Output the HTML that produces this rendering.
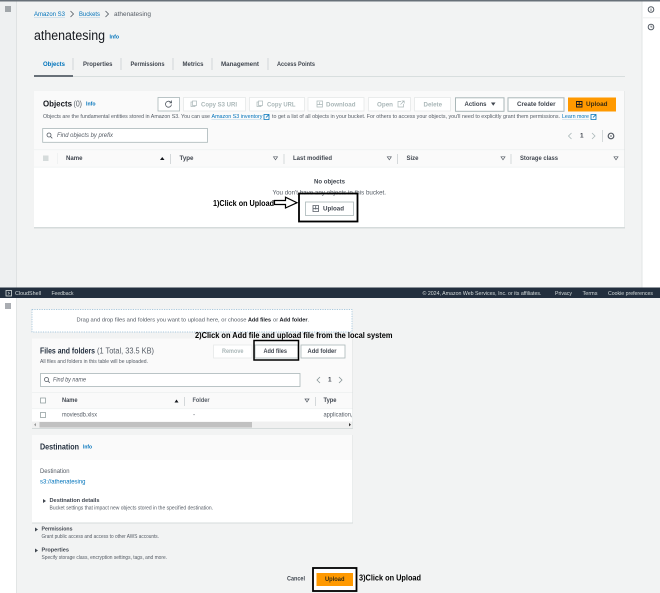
<!DOCTYPE html>
<html><head><meta charset="utf-8"><style>
html,body{margin:0;padding:0;background:#f2f3f3;width:660px;height:593px;overflow:hidden}
svg{display:block;filter:blur(.35px)}
text{font-family:"Liberation Sans",sans-serif;font-size:6.4px;fill:#16191f;dominant-baseline:central;transform:translateY(.6px)}
.b{font-weight:700}.g{fill:#545b64}.l{fill:#aab7b8;font-weight:700}.h{fill:#414750;font-weight:700}
.a{fill:#0073bb}.s{font-size:5.2px;fill:#545b64}.k{fill:#000;font-weight:700;font-size:8.4px}
.w{fill:#d5dbdb;font-size:5.400px}
.btn{fill:#fff;stroke:#aab7b8;stroke-width:.8}.dis{fill:#fff;stroke:#e6e9e9;stroke-width:.8}
.sep{stroke:#c4cacc;stroke-width:.7}
.ic{fill:none;stroke:#545b64;stroke-width:.8}
</style></head><body>
<svg width="660" height="593" viewBox="0 0 660 593" xmlns="http://www.w3.org/2000/svg">
<rect width="660" height="593" fill="#f2f3f3"/>
<!-- top -->
<rect width="660" height="1.5" fill="#687078"/>
<rect y="1.5" width="16" height="287" fill="#eef0f1"/><rect x="16" y="1.5" width="1" height="287" fill="#dfe2e3"/>
<rect x="642" y="1.5" width="18" height="287" fill="#fff"/><rect x="641.5" y="1.5" width="1" height="287" fill="#e2e5e5"/>
<rect x="643" y="17.5" width="17" height=".7" fill="#e6e9e9"/>
<path d="M5 7h6M5 9h6M5 11h6" stroke="#545b64" stroke-width=".9"/>
<circle cx="651" cy="9.500" r="2.800" fill="none" stroke="#545b64" stroke-width="1"/><path d="M651 8.500v2.500" stroke="#545b64" stroke-width=".8"/>
<circle cx="651" cy="27" r="2.800" fill="none" stroke="#545b64" stroke-width="1"/><path d="M651 25.500v1.500h1.500" class="ic"/>
<text x="34" y="14" class="a" textLength="31" lengthAdjust="spacingAndGlyphs">Amazon S3</text><path d="M34 17.300h31" stroke="#9fc6e0" stroke-width=".4"/>
<path d="M70.500 11l3 3-3 3" class="ic"/>
<text x="79" y="14" class="a" textLength="21" lengthAdjust="spacingAndGlyphs">Buckets</text><path d="M79 17.300h21" stroke="#9fc6e0" stroke-width=".4"/>
<path d="M105.500 11l3 3-3 3" class="ic"/>
<text x="114" y="14" class="g" textLength="37" lengthAdjust="spacingAndGlyphs">athenatesing</text>
<text x="34" y="35" style="font-size:13.500px;fill:#16191f" textLength="71" lengthAdjust="spacingAndGlyphs">athenatesing</text>
<text x="109.500" y="37" class="a b" style="font-size:5px" textLength="9.500" lengthAdjust="spacingAndGlyphs">Info</text>
<!-- tabs -->
<text x="43" y="64" class="a b" textLength="22" lengthAdjust="spacingAndGlyphs">Objects</text>
<text x="83" y="64" class="h" textLength="29.500" lengthAdjust="spacingAndGlyphs">Properties</text>
<text x="130.500" y="64" class="h" textLength="34" lengthAdjust="spacingAndGlyphs">Permissions</text>
<text x="182.500" y="64" class="h" textLength="21" lengthAdjust="spacingAndGlyphs">Metrics</text>
<text x="221" y="64" class="h" textLength="38" lengthAdjust="spacingAndGlyphs">Management</text>
<text x="277" y="64" class="h" textLength="38" lengthAdjust="spacingAndGlyphs">Access Points</text>
<path d="M73 58v12M121 58v12M173 58v12M212 58v12M268 58v12" class="sep"/>
<rect x="34" y="76" width="591" height=".9" fill="#d5dbdb"/><rect x="34" y="75" width="39" height="2" fill="#687078"/>
<!-- objects card -->
<rect x="34" y="91" width="591" height="137.500" fill="#d5dbdb"/>
<rect x="34" y="91" width="590.500" height="136" fill="#fff"/>
<rect x="34" y="91" width="590.500" height="76" fill="#fafafa"/>
<text x="43" y="103.500" class="b" style="font-size:7.800px" textLength="29" lengthAdjust="spacingAndGlyphs">Objects</text>
<text x="73.500" y="103.500" class="g" style="font-size:7.800px" textLength="8.500" lengthAdjust="spacingAndGlyphs">(0)</text>
<text x="86" y="104" class="a b" style="font-size:5px" textLength="9.500" lengthAdjust="spacingAndGlyphs">Info</text>
<rect x="158" y="97.500" width="21.500" height="13.500" class="btn"/>
<path d="M171 102.500a3 3 0 1 0 .5 2" class="ic"/><path d="M171.600 100.500v2.400h-2.200" class="ic"/>
<rect x="183.500" y="97.500" width="62" height="13.500" class="dis"/><text x="201" y="104.500" class="l" textLength="36" lengthAdjust="spacingAndGlyphs">Copy S3 URI</text>
<rect x="191" y="102" width="4" height="4.500" fill="none" stroke="#aab7b8" stroke-width=".7"/><rect x="192.500" y="101" width="4" height="4.500" fill="#fff" stroke="#aab7b8" stroke-width=".7"/>
<rect x="249.500" y="97.500" width="55" height="13.500" class="dis"/><text x="267" y="104.500" class="l" textLength="28.500" lengthAdjust="spacingAndGlyphs">Copy URL</text>
<rect x="257" y="102" width="4" height="4.500" fill="none" stroke="#aab7b8" stroke-width=".7"/><rect x="258.500" y="101" width="4" height="4.500" fill="#fff" stroke="#aab7b8" stroke-width=".7"/>
<rect x="308" y="97.500" width="56" height="13.500" class="dis"/><text x="326" y="104.500" class="l" textLength="29.500" lengthAdjust="spacingAndGlyphs">Download</text>
<path d="M317 101h5.500v6h-5.500zM319.700 102v3M317 104.500h5.500" fill="none" stroke="#aab7b8" stroke-width=".7"/>
<rect x="368.500" y="97.500" width="42" height="13.500" class="dis"/><text x="377" y="104.500" class="l" textLength="16" lengthAdjust="spacingAndGlyphs">Open</text>
<path d="M401 101.500h-3v5.500h5.500v-3M400.500 104.500l3.500-3.500M401.700 101h2.500v2.500" fill="none" stroke="#aab7b8" stroke-width=".7"/>
<rect x="414.500" y="97.500" width="36" height="13.500" class="dis"/><text x="423.500" y="104.500" class="l" textLength="18.500" lengthAdjust="spacingAndGlyphs">Delete</text>
<rect x="455.500" y="97.800" width="48.500" height="13.500" fill="#fff" stroke="#aab7b8" stroke-width="1"/><text x="464.500" y="104" class="h" textLength="22" lengthAdjust="spacingAndGlyphs">Actions</text><path d="M491 102.500h4.500l-2.250 3.200z" fill="#414750"/>
<rect x="508" y="97.800" width="56" height="13.500" fill="#fff" stroke="#aab7b8" stroke-width="1"/><text x="517" y="104" class="h" textLength="38.500" lengthAdjust="spacingAndGlyphs">Create folder</text>
<rect x="568" y="97.500" width="48" height="14" fill="#ff9900"/>
<path d="M576.500 101.500h5.500v5.500h-5.500zM579.200 102v3.500M576.500 104.500h5.500" fill="none" stroke="#16191f" stroke-width=".9"/>
<text x="586" y="104" class="b" textLength="21.500" lengthAdjust="spacingAndGlyphs" style="fill:#3a2c10">Upload</text>
<text x="43" y="116.500" class="s" textLength="167" lengthAdjust="spacingAndGlyphs">Objects are the fundamental entities stored in Amazon S3. You can use</text>
<text x="211.500" y="116.500" class="s" style="fill:#0073bb" textLength="51" lengthAdjust="spacingAndGlyphs">Amazon S3 inventory</text><path d="M211.500 119.500h51" stroke="#9fc6e0" stroke-width=".4"/>
<path d="M264 114.500h5v5h-5zM266 117.500l3-3" fill="none" stroke="#0073bb" stroke-width=".8"/>
<text x="272" y="116.500" class="s" textLength="288" lengthAdjust="spacingAndGlyphs">to get a list of all objects in your bucket. For others to access your objects, you'll need to explicitly grant them permissions.</text>
<text x="562" y="116.500" class="s" style="fill:#0073bb" textLength="27" lengthAdjust="spacingAndGlyphs">Learn more</text><path d="M562 119.500h27" stroke="#9fc6e0" stroke-width=".4"/>
<path d="M591 114.500h5v5h-5zM593 117.500l3-3" fill="none" stroke="#0073bb" stroke-width=".8"/>
<rect x="42.700" y="128.500" width="164.800" height="13.800" fill="#fff" stroke="#aab7b8" stroke-width=".8"/>
<circle cx="49" cy="135" r="2" class="ic"/><path d="M50.500 136.500l1.800 1.800" class="ic"/>
<text x="57" y="135" class="g" textLength="56" lengthAdjust="spacingAndGlyphs" style="font-style:italic">Find objects by prefix</text>
<path d="M571.500 133l-3 3 3 3M592 133l3 3-3 3" fill="none" stroke="#aab7b8" stroke-width=".8"/>
<text x="580" y="135.500" class="b" style="fill:#414750">1</text><path d="M602.500 130v12" class="sep"/>
<circle cx="611" cy="136" r="2.800" fill="none" stroke="#545b64" stroke-width="1.200"/><circle cx="611" cy="136" r=".8" fill="#545b64"/>
<rect x="34" y="149.500" width="590.500" height=".6" fill="#eaeded"/><rect x="34" y="166.800" width="590.500" height=".6" fill="#eaeded"/>
<rect x="43" y="155.500" width="5.500" height="5.500" fill="#d5dbdb"/>
<path d="M57.500 153v11" stroke="#eaeded" stroke-width=".6"/>
<text x="66" y="158" class="h" textLength="16.500" lengthAdjust="spacingAndGlyphs">Name</text>
<path d="M160 160h4.500l-2.250-3z" fill="#16191f"/><path d="M170.500 154v10M284 154v10M397.500 154v10M511 154v10" class="sep"/>
<text x="179.500" y="158" class="h" textLength="14" lengthAdjust="spacingAndGlyphs">Type</text>
<path d="M273.500 156.800h4l-2 3z" fill="#fff" stroke="#545b64" stroke-width=".7"/>
<text x="293" y="158" class="h" textLength="39" lengthAdjust="spacingAndGlyphs">Last modified</text>
<path d="M387.300 156.800h4l-2 3z" fill="#fff" stroke="#545b64" stroke-width=".7"/>
<text x="406.500" y="158" class="h" textLength="12" lengthAdjust="spacingAndGlyphs">Size</text>
<path d="M501 156.800h4l-2 3z" fill="#fff" stroke="#545b64" stroke-width=".7"/>
<text x="520" y="158" class="h" textLength="38" lengthAdjust="spacingAndGlyphs">Storage class</text>
<path d="M614 156.800h4l-2 3z" fill="#fff" stroke="#545b64" stroke-width=".7"/>
<text x="314" y="181.500" class="h" textLength="31" lengthAdjust="spacingAndGlyphs">No objects</text>
<text x="272.500" y="192.500" class="g" textLength="113.500" lengthAdjust="spacingAndGlyphs">You don't have any objects in this bucket.</text>
<rect x="305.500" y="202" width="48" height="13.500" class="btn"/>
<path d="M313 205.500h5.500v6h-5.500zM315.700 206v3.500M313 208.700h5.500" fill="none" stroke="#545b64" stroke-width=".8"/>
<text x="323" y="208.200" class="h" textLength="21" lengthAdjust="spacingAndGlyphs">Upload</text>
<rect x="299" y="193.500" width="58.500" height="28" fill="none" stroke="#000" stroke-width="1.800"/>
<text x="213" y="202.300" class="k" textLength="61" lengthAdjust="spacingAndGlyphs">1)Click on Upload</text>
<path d="M274.500 200.500h11v-3.300l11.500 5.500-11.500 5.300v-3.500h-11z" fill="#fff" stroke="#000" stroke-width="1.200"/>
<!-- bottom -->
<rect x="0" y="298" width="16" height="295" fill="#fff"/><rect x="16" y="298" width="1" height="295" fill="#e2e5e5"/>
<path d="M5 304h6M5 306h6M5 308h6" stroke="#545b64" stroke-width=".9"/>
<text x="33" y="296" class="s" style="fill:#0073bb" textLength="64" lengthAdjust="spacingAndGlyphs">to the Learn more</text>
<rect x="32" y="309.500" width="320" height="22.500" fill="#fff" stroke="#8fb8d4" stroke-width=".7" stroke-dasharray="1.200 1.200"/>
<text x="76.500" y="320" class="g" style="font-size:5.800px" textLength="170" lengthAdjust="spacingAndGlyphs">Drag and drop files and folders you want to upload here, or choose</text>
<text x="248" y="320" class="b" style="font-size:5.800px" textLength="23" lengthAdjust="spacingAndGlyphs">Add files</text>
<text x="273" y="320" class="g" style="font-size:5.800px">or</text>
<text x="279.500" y="320" class="b" style="font-size:5.800px" textLength="28" lengthAdjust="spacingAndGlyphs">Add folder</text>
<text x="307.500" y="320" class="g" style="font-size:5.800px">.</text>
<!-- files card -->
<rect x="32" y="338.500" width="321" height="90.500" fill="#d5dbdb"/>
<rect x="32" y="338.500" width="320.500" height="89.500" fill="#fff"/>
<rect x="32" y="338.500" width="320.500" height="70" fill="#fafafa"/>
<text x="40" y="350.500" class="b" style="font-size:7.800px;fill:#232f3e" textLength="55" lengthAdjust="spacingAndGlyphs">Files and folders</text>
<text x="97" y="350.500" class="g" style="font-size:7.800px" textLength="57" lengthAdjust="spacingAndGlyphs">(1 Total, 33.5 KB)</text>
<text x="40" y="361.500" class="s" textLength="108" lengthAdjust="spacingAndGlyphs">All files and folders in this table will be uploaded.</text>
<rect x="213.500" y="345" width="38.500" height="13" class="dis"/><text x="222" y="351" class="l" textLength="21.500" lengthAdjust="spacingAndGlyphs">Remove</text>
<rect x="255" y="345" width="43" height="13" class="btn"/><text x="263.500" y="351" class="h" textLength="23.500" lengthAdjust="spacingAndGlyphs">Add files</text>
<rect x="301" y="345" width="44" height="13" class="btn"/><text x="307.500" y="351" class="h" textLength="29" lengthAdjust="spacingAndGlyphs">Add folder</text>
<rect x="254" y="340.500" width="44.500" height="19.500" fill="none" stroke="#000" stroke-width="1.500"/>
<text x="195" y="334.200" class="k" textLength="197.500" lengthAdjust="spacingAndGlyphs">2)Click on Add file and upload file from the local system</text>
<rect x="40.500" y="373.500" width="259.500" height="13" fill="#fff" stroke="#aab7b8" stroke-width=".8"/>
<circle cx="46.500" cy="379.500" r="2" class="ic"/><path d="M48 381l1.800 1.800" class="ic"/>
<text x="53" y="379.500" class="g" style="font-style:italic" textLength="33" lengthAdjust="spacingAndGlyphs">Find by name</text>
<path d="M320 377l-3 3 3 3M339 377l3 3-3 3" fill="none" stroke="#879596" stroke-width=".8"/>
<text x="328" y="379.500" class="b" style="fill:#414750">1</text>
<rect x="32" y="392" width="320.500" height=".6" fill="#eaeded"/><rect x="32" y="408.500" width="320.500" height=".6" fill="#eaeded"/>
<rect x="40.500" y="398" width="5" height="5" fill="#fff" stroke="#879596" stroke-width=".7"/>
<text x="62" y="400" class="h" textLength="15.500" lengthAdjust="spacingAndGlyphs">Name</text>
<path d="M174.500 402.500h4l-2-3z" fill="#16191f"/><path d="M184.500 397v9M315.500 397v9" class="sep"/>
<text x="192.500" y="400" class="g b" textLength="17" lengthAdjust="spacingAndGlyphs">Folder</text>
<path d="M305 399h4l-2 3z" fill="#fff" stroke="#545b64" stroke-width=".7"/>
<text x="323.500" y="400" class="h" textLength="13" lengthAdjust="spacingAndGlyphs">Type</text>
<rect x="40.500" y="412.500" width="5" height="5" fill="#fff" stroke="#879596" stroke-width=".7"/>
<text x="62" y="414.500" class="g" textLength="35" lengthAdjust="spacingAndGlyphs">moviesdb.xlsx</text>
<text x="193" y="414.500" class="g">-</text>
<text x="323.500" y="414.500" class="g" textLength="29" lengthAdjust="spacingAndGlyphs">application,</text>
<rect x="32" y="421.500" width="320.500" height="6.500" fill="#f0f0f0"/>
<rect x="39.500" y="422" width="212.500" height="5.500" fill="#c1c1c1"/>
<path d="M349 423l2 1.700-2 1.700z" fill="#333"/><path d="M36 423l-2 1.700 2 1.700z" fill="#999"/>
<!-- destination -->
<rect x="32" y="435" width="321" height="88.500" fill="#d5dbdb"/>
<rect x="32" y="435" width="320.500" height="87.500" fill="#fff"/>
<rect x="32" y="435" width="320.500" height="25" fill="#fafafa"/>
<text x="40" y="446.500" class="b" style="font-size:7.800px;fill:#232f3e" textLength="39" lengthAdjust="spacingAndGlyphs">Destination</text>
<text x="83" y="447" class="a b" style="font-size:5px" textLength="9" lengthAdjust="spacingAndGlyphs">Info</text>
<text x="40" y="471" class="g" textLength="29.500" lengthAdjust="spacingAndGlyphs">Destination</text>
<text x="40" y="481.500" class="a" textLength="45.500" lengthAdjust="spacingAndGlyphs">s3://athenatesing</text>
<path d="M43 499l3 2-3 2z" fill="#414750"/>
<text x="49.500" y="500.500" class="h" style="font-size:5.800px" textLength="50" lengthAdjust="spacingAndGlyphs">Destination details</text>
<text x="49.500" y="508" class="s" textLength="163.500" lengthAdjust="spacingAndGlyphs">Bucket settings that impact new objects stored in the specified destination.</text>
<path d="M35 527.500l3 2-3 2z" fill="#414750"/>
<text x="41.500" y="529" class="h" style="font-size:5.800px" textLength="31" lengthAdjust="spacingAndGlyphs">Permissions</text>
<text x="41.500" y="536.500" class="s" textLength="117.500" lengthAdjust="spacingAndGlyphs">Grant public access and access to other AWS accounts.</text>
<path d="M35 548.500l3 2-3 2z" fill="#414750"/>
<text x="41.500" y="550" class="h" style="font-size:5.800px" textLength="27.500" lengthAdjust="spacingAndGlyphs">Properties</text>
<text x="41.500" y="557.500" class="s" textLength="125.500" lengthAdjust="spacingAndGlyphs">Specify storage class, encryption settings, tags, and more.</text>
<text x="287" y="578.500" class="h" textLength="18" lengthAdjust="spacingAndGlyphs">Cancel</text>
<rect x="313" y="568" width="43.500" height="23" fill="#fff" stroke="#000" stroke-width="1.800"/>
<rect x="316.500" y="573" width="36.500" height="13" fill="#ff9900"/>
<text x="325" y="578.800" class="b" textLength="19.500" lengthAdjust="spacingAndGlyphs" style="fill:#3a2c10">Upload</text>
<text x="359" y="577" class="k" textLength="62" lengthAdjust="spacingAndGlyphs">3)Click on Upload</text>
<!-- footer bar -->
<rect y="287.500" width="660" height="10.500" fill="#232f3e"/>
<rect x="6" y="290.500" width="5.500" height="5.500" fill="none" stroke="#d5dbdb" stroke-width=".8"/><path d="M8 292l1.500 1.200-1.500 1.200" fill="none" stroke="#d5dbdb" stroke-width=".6"/>
<text x="15" y="293.500" class="w" textLength="26" lengthAdjust="spacingAndGlyphs">CloudShell</text>
<text x="51.500" y="293.500" class="w" textLength="22" lengthAdjust="spacingAndGlyphs">Feedback</text>
<text x="422.500" y="293.500" class="w" textLength="119" lengthAdjust="spacingAndGlyphs">© 2024, Amazon Web Services, Inc. or its affiliates.</text>
<text x="555" y="293.500" class="w" textLength="17" lengthAdjust="spacingAndGlyphs">Privacy</text>
<text x="582.500" y="293.500" class="w" textLength="15" lengthAdjust="spacingAndGlyphs">Terms</text>
<text x="608" y="293.500" class="w" textLength="45" lengthAdjust="spacingAndGlyphs">Cookie preferences</text>
</svg>
</body></html>
